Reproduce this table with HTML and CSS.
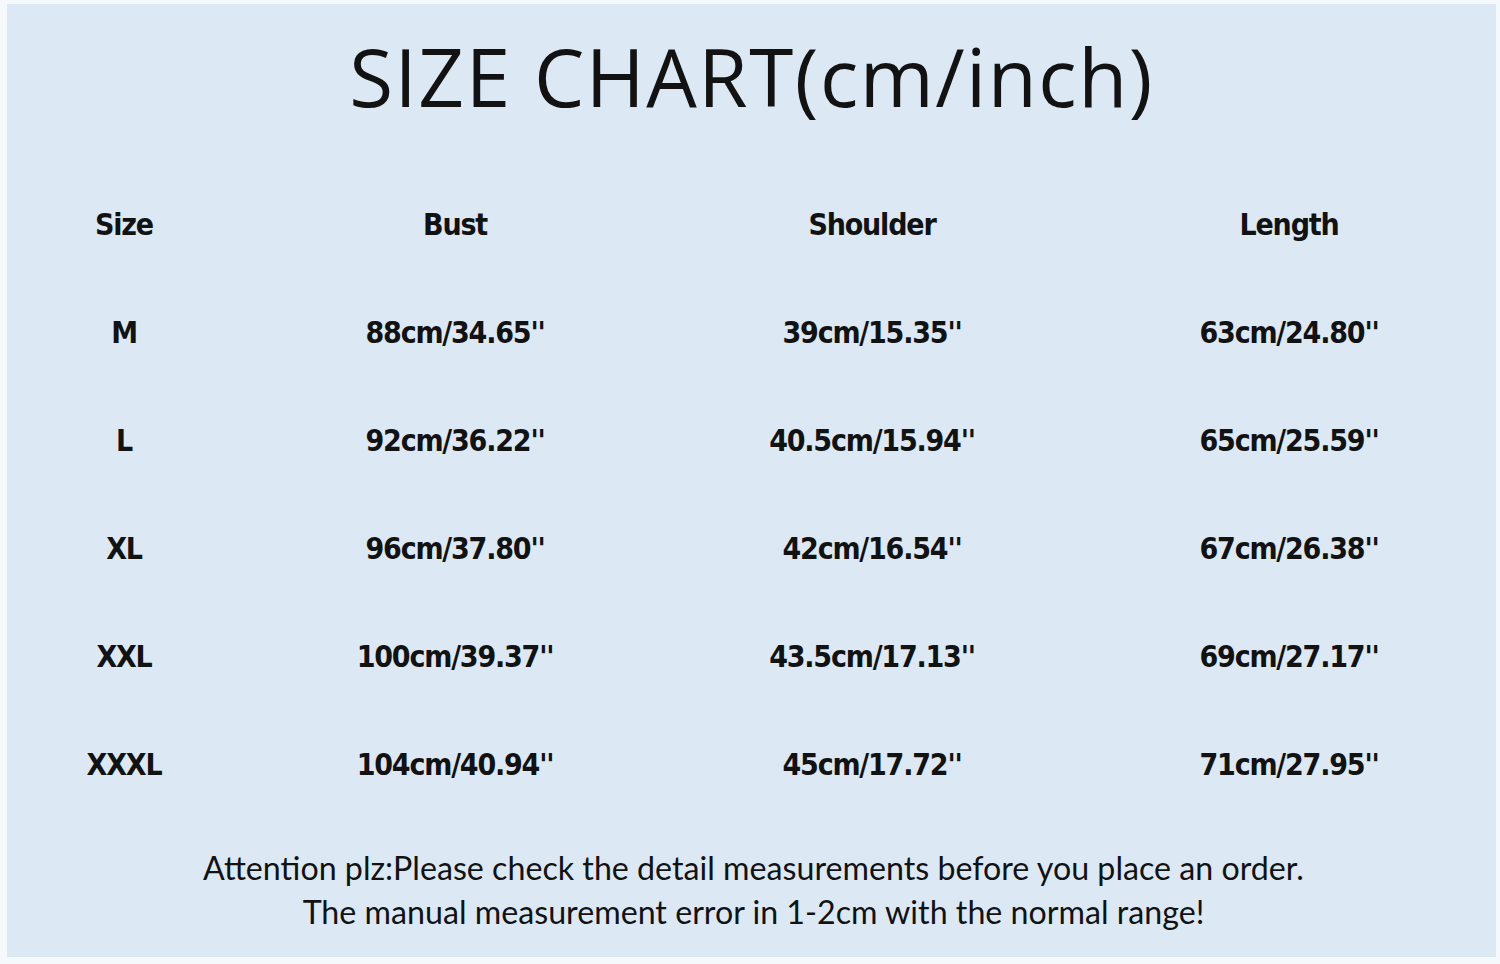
FILE: index.html
```html
<!DOCTYPE html>
<html lang="en">
<head>
<meta charset="utf-8">
<title>Size Chart</title>
<link rel="stylesheet" href="styles.css">
</head>
<body>
<div class="panel">
  <h1 class="title">SIZE CHART(cm/inch)</h1>
  <div class="chart">
    <div class="cell first">Size</div><div class="cell">Bust</div><div class="cell">Shoulder</div><div class="cell">Length</div>
    <div class="cell first">M</div><div class="cell">88cm/34.65''</div><div class="cell">39cm/15.35''</div><div class="cell">63cm/24.80''</div>
    <div class="cell first">L</div><div class="cell">92cm/36.22''</div><div class="cell">40.5cm/15.94''</div><div class="cell">65cm/25.59''</div>
    <div class="cell first">XL</div><div class="cell">96cm/37.80''</div><div class="cell">42cm/16.54''</div><div class="cell">67cm/26.38''</div>
    <div class="cell first">XXL</div><div class="cell">100cm/39.37''</div><div class="cell">43.5cm/17.13''</div><div class="cell">69cm/27.17''</div>
    <div class="cell first">XXXL</div><div class="cell">104cm/40.94''</div><div class="cell">45cm/17.72''</div><div class="cell">71cm/27.95''</div>
  </div>
  <div class="note">
    <p>Attention plz:Please check the detail measurements before you place an order.</p>
    <p>The manual measurement error in 1-2cm with the normal range!</p>
  </div>
</div>
</body>
</html>
```
FILE: styles.css
```css
html, body {
  margin: 0;
  padding: 0;
}
body {
  background: #f6f9fc;
  width: 1500px;
  height: 964px;
  overflow: hidden;
}
.panel {
  box-sizing: border-box;
  margin: 4px 4px 0 7px;
  width: 1489px;
  height: 953px;
  background: #dce9f5;
  padding-top: 22px;
  color: #121212;
}
.title {
  margin: 0;
  height: 100px;
  line-height: 100px;
  font-family: "Open Sans", sans-serif;
  font-style: normal;
  font-weight: 400;
  font-size: 80px;
  text-align: center;
  letter-spacing: 1.5px;
  padding-left: 0;
}
.chart {
  margin-top: 45px;
  padding-left: 37px;
  display: grid;
  grid-template-columns: 194px repeat(3, 400px);
  column-gap: 17px;
  grid-auto-rows: 108px;
}
.cell {
  line-height: 108px;
  text-align: center;
  font-family: "DejaVu Sans Condensed", "DejaVu Sans", sans-serif;
  font-weight: 700;
  font-size: 30px;
  letter-spacing: -1.2px;
}
.cell.first {
  padding-right: 34px;
}
.note {
  margin-top: 27px;
  text-align: center;
  font-family: "Lato", sans-serif;
  font-size: 32.2px;
  padding-left: 4px;
}
.note p {
  margin: 0;
  line-height: 44px;
}
```
